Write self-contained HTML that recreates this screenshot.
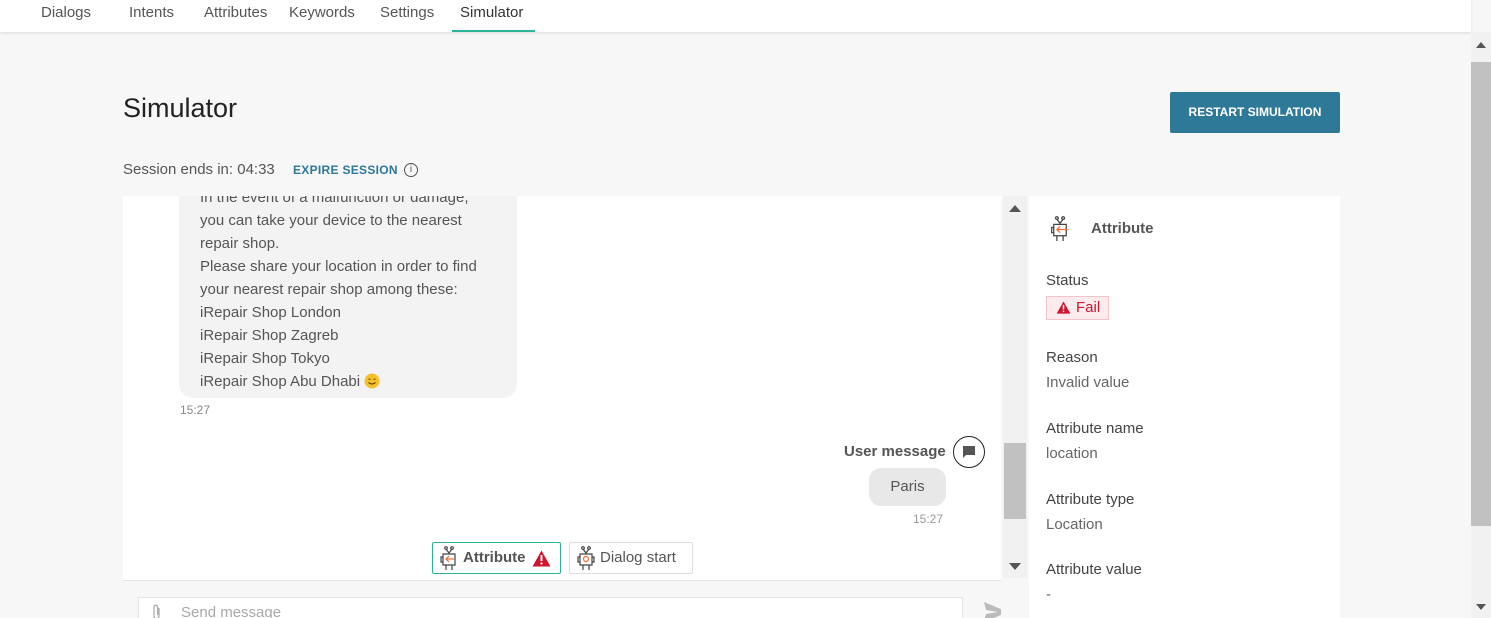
<!DOCTYPE html>
<html><head><meta charset="utf-8"><style>
*{margin:0;padding:0;box-sizing:border-box}
body{width:1491px;height:618px;overflow:hidden;background:#f7f7f7;font-family:"Liberation Sans",sans-serif;color:#444;position:relative}
.a{position:absolute;white-space:nowrap}
.nav{position:absolute;left:0;top:0;width:1471px;height:32px;background:#fff;box-shadow:0 1px 3px rgba(0,0,0,.12)}
.nav span{position:absolute;top:4px;font-size:15px;color:#555}
.chat{position:absolute;left:123px;top:196px;width:878px;height:422px;background:#fff;overflow:hidden}
.rp{position:absolute;left:1029px;top:196px;width:311px;height:422px;background:#fff}
.rp .l{position:absolute;left:17px;font-size:15px;color:#444}
.rp .v{position:absolute;left:17px;font-size:15px;color:#666}
.bubble{position:absolute;left:56px;top:-10px;width:338px;height:212px;background:#f3f3f3;border-radius:0 0 14px 14px;padding:0 21px;font-size:15px;line-height:23px;color:#555}
</style></head><body>
<div class="nav">
<span style="left:41px">Dialogs</span><span style="left:129px">Intents</span><span style="left:204px">Attributes</span><span style="left:289px">Keywords</span><span style="left:380px">Settings</span><span style="left:460px;color:#333">Simulator</span>
<div style="position:absolute;left:452px;top:30px;width:83px;height:2px;background:#2bb596"></div>
</div>
<div class="a" style="left:123px;top:93px;font-size:27px;color:#222">Simulator</div>
<div class="a" style="left:1170px;top:92px;width:170px;height:41px;background:#2e7898;color:#fff;font-size:12px;font-weight:bold;text-align:center;line-height:41px;border-radius:2px">RESTART SIMULATION</div>
<div class="a" style="left:123px;top:161px;font-size:15px;color:#555">Session ends in: 04:33</div>
<div class="a" style="left:293px;top:163px;font-size:12px;font-weight:bold;color:#2e7898;letter-spacing:.3px">EXPIRE SESSION</div>
<div class="a" style="left:404px;top:163px;width:14px;height:14px;border:1.3px solid #555;border-radius:50%;font-size:10px;text-align:center;line-height:12px;color:#555">i</div>
<div class="chat">
<div class="bubble">In the event of a malfunction or damage,<br>you can take your device to the nearest<br>repair shop.<br>Please share your location in order to find<br>your nearest repair shop among these:<br>iRepair Shop London<br>iRepair Shop Zagreb<br>iRepair Shop Tokyo<br>iRepair Shop Abu Dhabi <svg width="16" height="16" viewBox="0 0 16 16" style="vertical-align:-3px"><circle cx="8" cy="8" r="7.5" fill="#f5c02a"/><path d="M4.5 9.5q3.5 3 7 0" stroke="#6b4a10" stroke-width="1.2" fill="none"/><path d="M4.5 6.5q1-1 2 0M9.5 6.5q1-1 2 0" stroke="#6b4a10" stroke-width="1" fill="none"/></svg></div>
<div class="a" style="left:57px;top:207px;font-size:12px;color:#888">15:27</div>
<div class="a" style="left:721px;top:247px;font-size:15px;font-weight:bold;color:#555">User message</div>
<div class="a" style="left:830px;top:240px;width:32px;height:32px;border:1.3px solid #222;border-radius:50%"><svg style="position:absolute;left:8px;top:8px" width="14" height="14" viewBox="0 0 14 14"><path d="M1 1h12v9H4l-3 3z" fill="#555"/></svg></div>
<div class="a" style="left:746px;top:272px;width:77px;height:38px;background:#e8e8e8;border-radius:12px;font-size:15px;text-align:center;line-height:38px;color:#555">Paris</div>
<div class="a" style="left:790px;top:316px;font-size:12px;color:#999">15:27</div>
<div class="a" style="left:309px;top:346px;width:129px;height:32px;border:1px solid #2bb596;border-radius:2px;font-size:15px;font-weight:bold;line-height:30px;padding-left:30px;color:#555">Attribute
<svg style="position:absolute;left:99px;top:7px" width="19" height="17" viewBox="0 0 19 17"><path d="M9.5 0.5L18.5 16.5H0.5z" fill="#d0152e"/><path d="M9.5 5v6" stroke="#fff" stroke-width="2"/><circle cx="9.5" cy="13.5" r="1.1" fill="#fff"/></svg>
<svg style="position:absolute;left:6px;top:3px" width="20" height="25" viewBox="0 0 20 25" fill="none" stroke="#444" stroke-width="1.2"><circle cx="7" cy="2" r="1.3"/><circle cx="13" cy="2" r="1.3"/><path d="M7 3l3 4 3-4M4 8h12v11H4zM4 11H2v5h2M7 19v5M13 19v5"/><path d="M15 13H7M10 10l-3 3 3 3" stroke="#f07030"/></svg></div>
<div class="a" style="left:446px;top:346px;width:124px;height:32px;border:1px solid #ddd;border-radius:2px;font-size:15px;line-height:30px;padding-left:30px;color:#555">Dialog start
<svg style="position:absolute;left:6px;top:3px" width="20" height="25" viewBox="0 0 20 25" fill="none" stroke="#444" stroke-width="1.2"><circle cx="7" cy="2" r="1.3"/><circle cx="13" cy="2" r="1.3"/><path d="M7 3l3 4 3-4M4 8h12v11H4zM4 11H2v5h2M16 11h2v5h-2M7 19v5M13 19v5"/><circle cx="10" cy="13" r="2.5" stroke="#f07030"/></svg></div>
<div class="a" style="left:0;top:384px;width:878px;height:38px;background:#f7f7f7;border-top:1px solid #e3e3e3"></div>
<div class="a" style="left:15px;top:401px;width:825px;height:30px;background:#fff;border:1px solid #e5e5e5;font-size:15px;color:#aaa;padding:6px 42px">Send message</div>
<svg class="a" style="left:28px;top:407px" width="12" height="18" viewBox="0 0 12 18" fill="none" stroke="#aaa" stroke-width="1.3"><path d="M8 5v8a2.5 2.5 0 0 1-5 0V4a1.8 1.8 0 0 1 3.6 0v8"/></svg>
<svg class="a" style="left:860px;top:405px" width="26" height="22" viewBox="0 0 26 22"><path d="M1 1l24 10L1 21l2-8 12-2-12-2z" fill="#bbb"/></svg>
</div>
<div class="a" style="left:1003px;top:196px;width:24px;height:382px;background:#f1f1f1"></div>
<div class="a" style="left:1004px;top:443px;width:22px;height:76px;background:#c1c1c1"></div>
<div class="a" style="left:1009px;top:205px;border:6px solid transparent;border-bottom:7px solid #555;border-top:0"></div>
<div class="a" style="left:1009px;top:563px;border:6px solid transparent;border-top:7px solid #555;border-bottom:0"></div>
<div class="rp">
<svg style="position:absolute;left:20px;top:20px" width="22" height="26" viewBox="0 0 20 25" fill="none" stroke="#444" stroke-width="1.2"><circle cx="7" cy="2" r="1.3"/><circle cx="13" cy="2" r="1.3"/><path d="M7 3l3 4 3-4M4 8h12v11H4zM4 11H2v5h2M7 19v5M13 19v5"/><path d="M18 13H7M10 10l-3 3 3 3" stroke="#f07030"/></svg>
<div class="a" style="left:62px;top:24px;font-size:15px;font-weight:bold;color:#555">Attribute</div>
<div class="l" style="top:76px">Status</div>
<div class="a" style="left:17px;top:100px;width:63px;height:24px;background:#fdecee;border:1px solid #f5c3c9;color:#d0152e;font-size:15px;line-height:22px;padding-left:29px">Fail
<svg style="position:absolute;left:9px;top:4px" width="15" height="13" viewBox="0 0 19 17"><path d="M9.5 0.5L18.5 16.5H0.5z" fill="#d0152e"/><path d="M9.5 5v6" stroke="#fff" stroke-width="2"/><circle cx="9.5" cy="13.5" r="1.1" fill="#fff"/></svg></div>
<div class="l" style="top:153px">Reason</div><div class="v" style="top:178px">Invalid value</div>
<div class="l" style="top:224px">Attribute name</div><div class="v" style="top:249px">location</div>
<div class="l" style="top:295px">Attribute type</div><div class="v" style="top:320px">Location</div>
<div class="l" style="top:365px">Attribute value</div><div class="v" style="top:390px">-</div>
</div>
<div class="a" style="left:1471px;top:32px;width:20px;height:586px;background:#f1f1f1"></div>
<div class="a" style="left:1471px;top:62px;width:20px;height:464px;background:#c1c1c1"></div>
<div class="a" style="left:1476px;top:42px;border:5px solid transparent;border-bottom:6px solid #555;border-top:0"></div>
<div class="a" style="left:1476px;top:604px;border:5px solid transparent;border-top:6px solid #555;border-bottom:0"></div>
</body></html>
